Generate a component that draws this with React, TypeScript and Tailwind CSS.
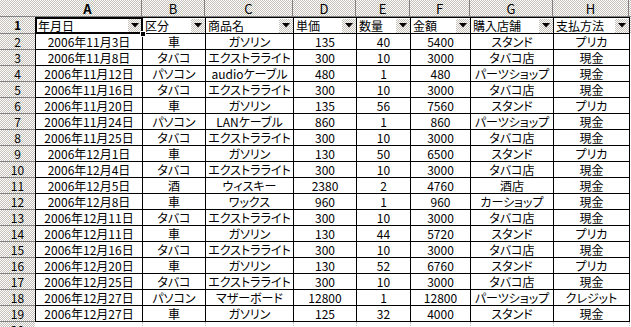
import React from "react";

const dither =
  "bg-[image:conic-gradient(#c4c0b8_25%,#ffffff_0_50%,#c4c0b8_0_75%,#ffffff_0)] bg-[length:2px_2px]";

const widths = [
  "w-[108px]",
  "w-[63px]",
  "w-[88px]",
  "w-[63px]",
  "w-[54px]",
  "w-[60px]",
  "w-[83px]",
  "w-[76px]",
];

const letters = ["A", "B", "C", "D", "E", "F", "G", "H"];
const headers = ["年月日", "区分", "商品名", "単価", "数量", "金額", "購入店舗", "支払方法"];

const rows: string[][] = [
  ["2006年11月3日", "車", "ガソリン", "135", "40", "5400", "スタンド", "プリカ"],
  ["2006年11月8日", "タバコ", "エクストラライト", "300", "10", "3000", "タバコ店", "現金"],
  ["2006年11月12日", "パソコン", "audioケーブル", "480", "1", "480", "パーツショップ", "現金"],
  ["2006年11月16日", "タバコ", "エクストラライト", "300", "10", "3000", "タバコ店", "現金"],
  ["2006年11月20日", "車", "ガソリン", "135", "56", "7560", "スタンド", "プリカ"],
  ["2006年11月24日", "パソコン", "LANケーブル", "860", "1", "860", "パーツショップ", "現金"],
  ["2006年11月25日", "タバコ", "エクストラライト", "300", "10", "3000", "タバコ店", "現金"],
  ["2006年12月1日", "車", "ガソリン", "130", "50", "6500", "スタンド", "プリカ"],
  ["2006年12月4日", "タバコ", "エクストラライト", "300", "10", "3000", "タバコ店", "現金"],
  ["2006年12月5日", "酒", "ウィスキー", "2380", "2", "4760", "酒店", "現金"],
  ["2006年12月8日", "車", "ワックス", "960", "1", "960", "カーショップ", "現金"],
  ["2006年12月11日", "タバコ", "エクストラライト", "300", "10", "3000", "タバコ店", "現金"],
  ["2006年12月11日", "車", "ガソリン", "130", "44", "5720", "スタンド", "プリカ"],
  ["2006年12月16日", "タバコ", "エクストラライト", "300", "10", "3000", "タバコ店", "現金"],
  ["2006年12月20日", "車", "ガソリン", "130", "52", "6760", "スタンド", "プリカ"],
  ["2006年12月25日", "タバコ", "エクストラライト", "300", "10", "3000", "タバコ店", "現金"],
  ["2006年12月27日", "パソコン", "マザーボード", "12800", "1", "12800", "パーツショップ", "クレジット"],
  ["2006年12月27日", "車", "ガソリン", "125", "32", "4000", "スタンド", "現金"],
];

function DropButton() {
  return (
    <div className={`w-[14px] h-[14px] shrink-0 flex items-center justify-center ${dither}`}>
      <svg width="8" height="5" viewBox="0 0 8 5">
        <polygon points="0,0 8,0 4,4.5" fill="#000" />
      </svg>
    </div>
  );
}

export default function App() {
  return (
    <div
      className="w-[631px] h-[327px] overflow-hidden bg-white text-black text-[12px] leading-none [font-feature-settings:'palt'] select-none"
      style={{ fontFamily: '"Noto Sans CJK JP", "Noto Sans", sans-serif' }}
    >
      {/* column header row */}
      <div className="flex h-[17px]">
        <div className={`w-[35px] shrink-0 border-r border-b border-[#808080] ${dither}`} />
        {letters.map((l, i) => (
          <div
            key={l}
            className={`${widths[i]} shrink-0 flex items-center justify-center text-[13px] border-r border-b border-[#808080] ${dither} ${
              i === 0 ? "font-bold -ml-px" : ""
            }`}
          >
            {l}
          </div>
        ))}
        <div className={`flex-1 border-b border-[#808080] ${dither}`} />
      </div>

      {/* row 1 header cells */}
      <div className="flex h-[17px]">
        <div className={`w-[35px] shrink-0 flex items-center justify-center font-bold border-b border-[#808080] ${dither}`}>
          1
        </div>
        {headers.map((h, i) => (
          <div
            key={h}
            className={`${widths[i]} shrink-0 relative flex items-center justify-between pl-[2px] border-t border-r border-b border-black bg-white ${
              i === 0 ? "border-l" : ""
            }`}
          >
            <span className="whitespace-nowrap">{h}</span>
            <DropButton />
            {i === 0 && (
              <>
                <div className="absolute inset-[-1px] border-2 border-black pointer-events-none" />
                <div className="absolute right-[-4px] bottom-[-4px] w-[6px] h-[6px] bg-black border border-white z-10" />
              </>
            )}
          </div>
        ))}
        <div className={`flex-1 ${dither}`} />
      </div>

      {/* data rows */}
      {rows.map((r, ri) => (
        <div key={ri} className="flex h-[16px]">
          <div className={`w-[35px] shrink-0 flex items-center justify-center border-b border-[#808080] ${dither}`}>
            {ri + 2}
          </div>
          {r.map((c, ci) => (
            <div
              key={ci}
              className={`${widths[ci]} shrink-0 flex items-center justify-center whitespace-nowrap border-r border-b border-black ${
                ci === 0 ? "border-l" : ""
              }`}
            >
              {c}
            </div>
          ))}
          <div className="flex-1 bg-white" />
        </div>
      ))}

      {/* row 20 */}
      <div className="flex h-[16px]">
        <div className={`w-[35px] shrink-0 flex items-start justify-center pt-[2px] border-b border-[#808080] ${dither}`}>
          20
        </div>
        {widths.map((w, ci) => (
          <div
            key={ci}
            className={`${w} shrink-0 border-r border-b border-dotted border-[#c0c0c0]`}
          />
        ))}
        <div className="flex-1 bg-white" />
      </div>
    </div>
  );
}
